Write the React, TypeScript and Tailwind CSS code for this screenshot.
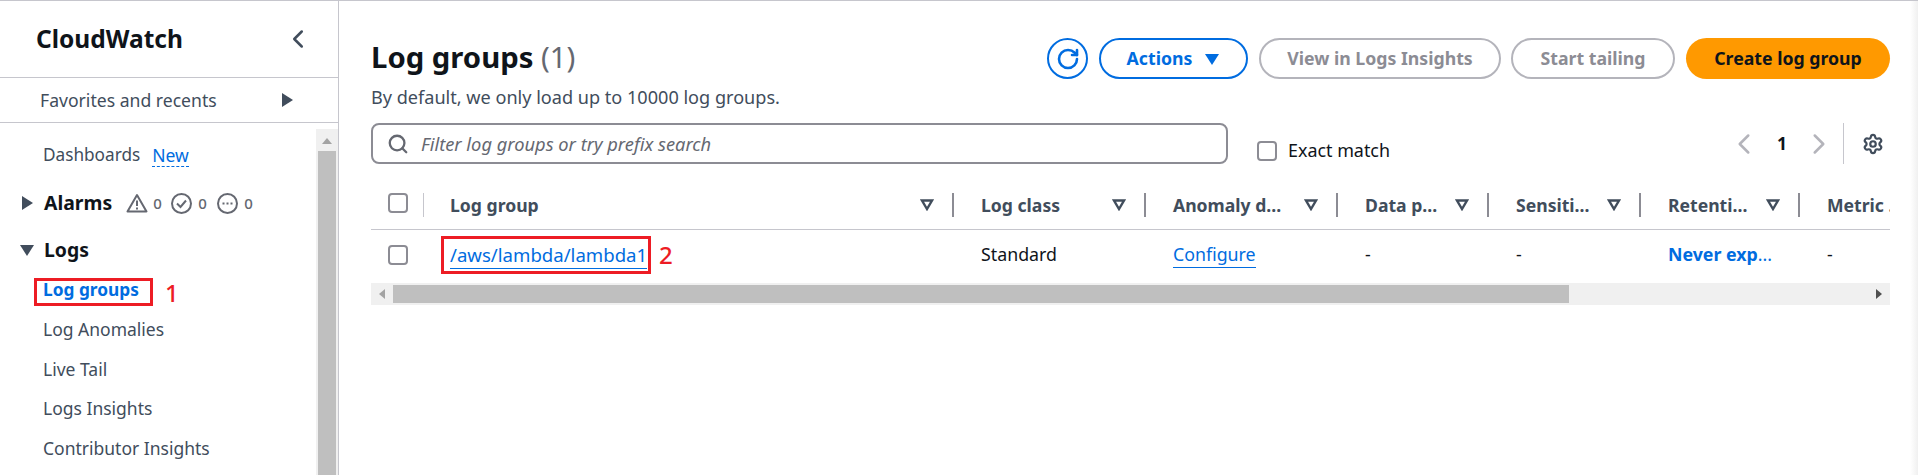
import { ChevronLeft, ChevronRight, RotateCw, Search, Settings } from "lucide-react";

const font = "font-['Noto_Sans',sans-serif]";

const Caret = ({ dir }: { dir: "right" | "down" }) => {
  const pts = {
    right: "2,1 13,8 2,15",
    down: "1,3 15,3 8,14",
  }[dir];
  return (
    <svg width="16" height="16" viewBox="0 0 16 16" className="shrink-0">
      <polygon points={pts} fill="currentColor" />
    </svg>
  );
};

const SortIcon = () => (
  <svg width="14" height="12" viewBox="0 0 14 12" className="shrink-0 text-[#414d5c]">
    <polygon points="2,1.5 12,1.5 7,10" fill="none" stroke="currentColor" strokeWidth="2.4" />
  </svg>
);

const Checkbox = () => (
  <span className="block w-[20px] h-[20px] rounded-[4px] border-2 border-[#8c8c94] bg-white" />
);

const navItems = ["Log Anomalies", "Live Tail", "Logs Insights", "Contributor Insights"];

const Sidebar = () => (
  <aside className="w-[339px] shrink-0 h-full border-r border-[#c6c6cd] flex flex-col overflow-hidden">
    <div className="h-[77px] shrink-0 border-b border-[#c6c6cd] flex items-center justify-between pl-[36px] pr-[25px]">
      <span className="text-[24.5px] leading-[30px] font-bold text-[#0f141a]">CloudWatch</span>
      <ChevronLeft size={30} strokeWidth={2} className="text-[#414d5c]" />
    </div>
    <div className="h-[45px] shrink-0 border-b border-[#c6c6cd] flex items-center justify-between pl-[40px] pr-[42px]">
      <span className="text-[17.6px] text-[#414d5c]">Favorites and recents</span>
      <span className="text-[#414d5c]"><Caret dir="right" /></span>
    </div>
    <div className="flex-1 flex min-h-0 pt-[6px]">
      <nav className="flex-1 min-w-0">
        <div className="h-[48px] flex items-center pl-[43px] gap-[12px] mt-[2px] text-[17.5px]">
          <span className="text-[#414d5c] text-[17.2px]">Dashboards</span>
          <span className="text-[#006ce0] border-b border-dashed border-[#006ce0] leading-[22px]">New</span>
        </div>
        <div className="h-[40px] mt-[4px] flex items-center pl-[20px]">
          <span className="text-[#414d5c]"><Caret dir="right" /></span>
          <span className="ml-[8px] text-[19.4px] font-bold text-[#0f141a]">Alarms</span>
          <span className="flex items-center ml-[14px] text-[15px] text-[#656871]">
            <svg width="22" height="20" viewBox="0 0 22 20" fill="none" stroke="currentColor" strokeWidth="2"><path d="M11 2 L20.5 18.5 H1.5 Z" strokeLinejoin="round" /><path d="M11 7.5 V13 M11 14.5 V16.5" /></svg>
            <span className="ml-[5px] w-[18px] font-medium">0</span>
            <svg width="21" height="21" viewBox="0 0 21 21" fill="none" stroke="currentColor" strokeWidth="2"><circle cx="10.5" cy="10.5" r="9.5" /><path d="M6 10.5 L9.5 14 L15 7.5" /></svg>
            <span className="ml-[6px] w-[19px] font-medium">0</span>
            <svg width="21" height="21" viewBox="0 0 21 21" fill="none" stroke="currentColor" strokeWidth="2"><circle cx="10.5" cy="10.5" r="9.5" /><path d="M5.5 10.5 H7.5 M9.5 10.5 H11.5 M13.5 10.5 H15.5" /></svg>
            <span className="ml-[6px] font-medium">0</span>
          </span>
        </div>
        <div className="h-[40px] mt-[7px] flex items-center pl-[19px]">
          <span className="text-[#414d5c]"><Caret dir="down" /></span>
          <span className="ml-[9px] text-[19.4px] font-bold text-[#0f141a]">Logs</span>
        </div>
        <div className="h-[28px] flex items-center pl-[43px] relative mt-[6px]">
          <span className="text-[17.3px] font-bold text-[#006ce0]">Log groups</span>
          <span className="absolute left-[34px] top-[2px] w-[119px] h-[28px] border-[3px] border-[#ed1c24]" />
          <span className="absolute left-[165px] top-[2px] text-[24px] leading-[30px] font-medium text-[#ed1c24]">1</span>
        </div>
        <div className="flex flex-col pl-[43px] mt-[13px] gap-[14.7px] text-[17.5px] text-[#414d5c]">
          {navItems.map((n) => (
            <span key={n} className="h-[25px] leading-[25px]">{n}</span>
          ))}
        </div>
      </nav>
      <div className="w-[22px] shrink-0 bg-[#f0f0f0] flex flex-col items-center px-[2px] pt-[6px]">
        <span className="w-0 h-0 border-x-[5px] border-x-transparent border-b-[6px] border-b-[#a3a3a3] mt-[3px] mb-[6px]" />
        <span className="flex-1 w-full bg-[#bfbfbf] mt-[1px]" />
      </div>
    </div>
  </aside>
);

const cols = [
  { label: "Log group", w: "w-[530px]", pad: "pl-[26px]" },
  { label: "Log class", w: "w-[192px]", pad: "pl-[27px]" },
  { label: "Anomaly d...", w: "w-[192px]", pad: "pl-[27px]" },
  { label: "Data p...", w: "w-[151px]", pad: "pl-[27px]" },
  { label: "Sensiti...", w: "w-[152px]", pad: "pl-[27px]" },
  { label: "Retenti...", w: "w-[159px]", pad: "pl-[27px]" },
];

const Table = () => (
  <div className="mt-[18px] w-[1519px]">
    {/* Header */}
    <div className="h-[48px] flex items-center border-b border-[#c6c6cd] pb-[1px] text-[17.6px] font-bold text-[#414d5c]">
      <div className="w-[53px] h-[24px] shrink-0 pl-[17px] relative">
        <Checkbox />
        <span className="absolute right-0 top-0 w-px h-[24px] bg-[#c6c6cd]" />
      </div>
      {cols.map((c) => (
        <div key={c.label} className={`${c.w} ${c.pad} shrink-0 h-[24px] flex items-center justify-between pr-[18px] border-r-2 border-[#8c8c94]`}>
          <span>{c.label}</span>
          <SortIcon />
        </div>
      ))}
      <div className="flex-1 min-w-0 pl-[27px] overflow-hidden whitespace-nowrap">Metric ...</div>
    </div>
    {/* Row */}
    <div className="h-[53px] flex items-center pb-[4px] text-[17.8px] text-[#0f141a]">
      <div className="w-[53px] shrink-0 pl-[17px]"><Checkbox /></div>
      <div className="w-[530px] shrink-0 pl-[26px] relative text-[18.6px]">
        <span className="text-[#006ce0] border-b border-[#006ce0] pb-px">/aws/lambda/lambda1</span>
        <span className="absolute left-[17px] top-[-5px] w-[210px] h-[38px] border-[3px] border-[#ed1c24]" />
        <span className="absolute left-[235px] top-[-6px] text-[24px] leading-[40px] font-medium text-[#ed1c24]">2</span>
      </div>
      <div className="w-[192px] shrink-0 pl-[27px]">Standard</div>
      <div className="w-[192px] shrink-0 pl-[27px]">
        <span className="text-[#006ce0] border-b border-[#006ce0] pb-px">Configure</span>
      </div>
      <div className="w-[151px] shrink-0 pl-[27px]">-</div>
      <div className="w-[152px] shrink-0 pl-[27px]">-</div>
      <div className="w-[159px] shrink-0 pl-[27px] font-bold text-[#006ce0]">
        Never exp<span className="font-normal">...</span>
      </div>
      <div className="flex-1 pl-[27px]">-</div>
    </div>
    {/* Horizontal scrollbar */}
    <div className="h-[22px] bg-[#f0f0f0] flex items-center">
      <span className="w-[22px] flex justify-center">
        <span className="w-0 h-0 border-y-[5px] border-y-transparent border-r-[6px] border-r-[#a3a3a3]" />
      </span>
      <span className="w-[1176px] h-[18px] bg-[#bfbfbf]" />
      <span className="flex-1" />
      <span className="w-[22px] flex justify-center">
        <span className="w-0 h-0 border-y-[5px] border-y-transparent border-l-[6px] border-l-[#505050]" />
      </span>
    </div>
  </div>
);

const Main = () => (
  <main className="flex-1 min-w-0 pl-[32px] pr-[20px] pt-[37px]">
    <div className="flex justify-between items-start h-[85px]">
      <div>
        <h1 className="text-[29.3px] leading-[40px] mt-[-1px] font-bold text-[#0f141a]">
          Log groups <span className="font-normal text-[#656871]">(1)</span>
        </h1>
        <p className="text-[18.1px] leading-[22px] mt-[9px] text-[#414d5c]">By default, we only load up to 10000 log groups.</p>
      </div>
      <div className="flex items-center gap-[11px] text-[17.7px] font-bold">
        <span className="w-[41px] h-[41px] rounded-full border-2 border-[#006ce0] text-[#006ce0] flex items-center justify-center">
          <RotateCw size={24} strokeWidth={2.6} />
        </span>
        <span className="w-[149px] h-[41px] rounded-full border-2 border-[#006ce0] text-[#006ce0] flex items-center justify-center gap-[12px]">
          Actions <Caret dir="down" />
        </span>
        <span className="w-[242px] h-[41px] mr-[-1px] rounded-full border-2 border-[#b4b4bb] text-[#8c8c94] flex items-center justify-center">View in Logs Insights</span>
        <span className="w-[164px] h-[41px] rounded-full border-2 border-[#b4b4bb] text-[#8c8c94] flex items-center justify-center">Start tailing</span>
        <span className="w-[204px] h-[41px] rounded-full bg-[#ff9900] text-[#0f141a] flex items-center justify-center">Create log group</span>
      </div>
    </div>
    <div className="flex items-center h-[41px]">
      <div className="w-[857px] h-[41px] rounded-[8px] border-2 border-[#8c8c94] flex items-center pl-[14px] gap-[12px]">
        <Search size={22} strokeWidth={2.5} className="text-[#656871]" />
        <span className="italic text-[18.3px] text-[#656871]">Filter log groups or try prefix search</span>
      </div>
      <div className="flex items-center gap-[11px] ml-[29px] mt-[15px]">
        <Checkbox />
        <span className="text-[17.9px] mt-[-2px] text-[#0f141a]">Exact match</span>
      </div>
      <div className="flex items-center ml-auto text-[#b4b4bb]">
        <ChevronLeft size={34} strokeWidth={1.8} />
        <span className="ml-[16px] mr-[15px] text-[17.5px] font-bold text-[#0f141a]">1</span>
        <ChevronRight size={34} strokeWidth={1.8} />
        <span className="w-px h-[41px] bg-[#c6c6cd] ml-[7px] mr-[18px]" />
        <Settings size={22} strokeWidth={2.4} className="text-[#414d5c] mr-[6px]" />
      </div>
    </div>
    <Table />
  </main>
);

export default function App() {
  return (
    <div className={`${font} w-[1918px] h-[475px] bg-white flex border-t border-[#c6c6cd] overflow-hidden`}>
      <Sidebar />
      <Main />
      <div className="w-[8px] shrink-0 bg-linear-to-r from-white to-[#f0f0f0]" />
    </div>
  );
}
